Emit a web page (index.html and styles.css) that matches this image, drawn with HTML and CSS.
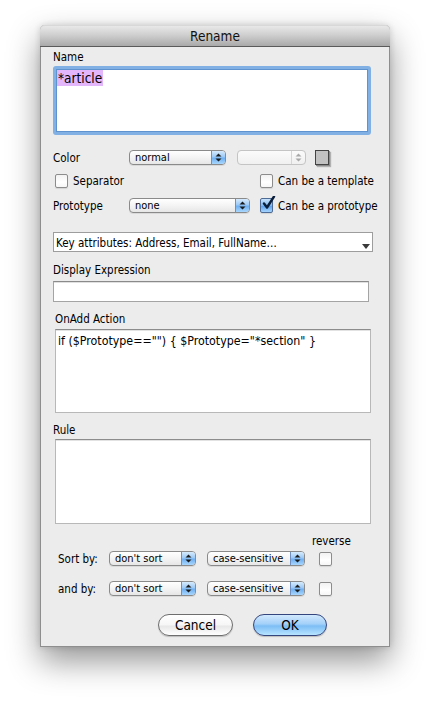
FILE: index.html
```html
<!DOCTYPE html>
<html>
<head>
<meta charset="utf-8">
<title>Rename</title>
<link rel="stylesheet" href="styles.css">
</head>
<body>
<div class="stage">
  <div class="window">
    <div class="titlebar">Rename</div>
    <div class="content">
      <div class="label lbl-name">Name</div>
      <div class="namefield"><span class="sel">*article</span></div>

      <div class="row row-color">
        <span class="rlabel">Color</span>
        <div class="popup w97"><span class="ptext">normal</span><span class="cap"><svg width="7" height="9" viewBox="0 0 7 9"><path d="M3.5 0.5 L6.5 3.5 L0.5 3.5 Z M3.5 8.5 L6.5 5.5 L0.5 5.5 Z" fill="#1b1b1b"/></svg></span></div>
        <div class="popup disabled w69"><span class="ptext"></span><span class="cap"><svg width="7" height="9" viewBox="0 0 7 9"><path d="M3.5 0.5 L6.5 3.5 L0.5 3.5 Z M3.5 8.5 L6.5 5.5 L0.5 5.5 Z" fill="#a8a8a8"/></svg></span></div>
        <div class="swatch"></div>
      </div>

      <div class="row row-checks">
        <label class="check sep"><span class="box"></span><span>Separator</span></label>
        <label class="check"><span class="box"></span><span>Can be a template</span></label>
      </div>

      <div class="row row-proto">
        <span class="rlabel">Prototype</span>
        <div class="popup w121"><span class="ptext">none</span><span class="cap"><svg width="7" height="9" viewBox="0 0 7 9"><path d="M3.5 0.5 L6.5 3.5 L0.5 3.5 Z M3.5 8.5 L6.5 5.5 L0.5 5.5 Z" fill="#1b1b1b"/></svg></span></div>
        <label class="check proto"><span class="box checked"><svg width="15" height="15" viewBox="0 0 15 15"><path d="M3 7.5 L6 11.5 L13 0.5" fill="none" stroke="#0b1e3a" stroke-width="2.4" stroke-linecap="round" stroke-linejoin="round"/></svg></span><span>Can be a prototype</span></label>
      </div>

      <div class="keyattrs"><span>Key attributes: Address, Email, FullName…</span><svg width="8" height="5" viewBox="0 0 8 5"><path d="M0 0 L8 0 L4 5 Z" fill="#3a3a3a"/></svg></div>

      <div class="label lbl-disp">Display Expression</div>
      <div class="textfield"></div>

      <div class="label lbl-onadd">OnAdd Action</div>
      <div class="textbox onadd">if ($Prototype=="") { $Prototype="*section" }</div>

      <div class="label lbl-rule">Rule</div>
      <div class="textbox rule"></div>

      <div class="reverse">reverse</div>
      <div class="row sortrow">
        <span class="slabel">Sort by:</span>
        <div class="popup w87"><span class="ptext">don't sort</span><span class="cap"><svg width="7" height="9" viewBox="0 0 7 9"><path d="M3.5 0.5 L6.5 3.5 L0.5 3.5 Z M3.5 8.5 L6.5 5.5 L0.5 5.5 Z" fill="#1b1b1b"/></svg></span></div>
        <div class="popup w98"><span class="ptext">case-sensitive</span><span class="cap"><svg width="7" height="9" viewBox="0 0 7 9"><path d="M3.5 0.5 L6.5 3.5 L0.5 3.5 Z M3.5 8.5 L6.5 5.5 L0.5 5.5 Z" fill="#1b1b1b"/></svg></span></div>
        <span class="box sortbox"></span>
      </div>
      <div class="row sortrow androw">
        <span class="slabel">and by:</span>
        <div class="popup w87"><span class="ptext">don't sort</span><span class="cap"><svg width="7" height="9" viewBox="0 0 7 9"><path d="M3.5 0.5 L6.5 3.5 L0.5 3.5 Z M3.5 8.5 L6.5 5.5 L0.5 5.5 Z" fill="#1b1b1b"/></svg></span></div>
        <div class="popup w98"><span class="ptext">case-sensitive</span><span class="cap"><svg width="7" height="9" viewBox="0 0 7 9"><path d="M3.5 0.5 L6.5 3.5 L0.5 3.5 Z M3.5 8.5 L6.5 5.5 L0.5 5.5 Z" fill="#1b1b1b"/></svg></span></div>
        <span class="box sortbox"></span>
      </div>

      <div class="buttons">
        <div class="btn cancel">Cancel</div>
        <div class="btn ok">OK</div>
      </div>
    </div>
  </div>
</div>
</body>
</html>
```

FILE: styles.css
```css
* { box-sizing: border-box; }
html, body { margin: 0; padding: 0; background: #fff; }
body {
  width: 430px;
  height: 702px;
  overflow: hidden;
  font-family: "DejaVu Sans", "Liberation Sans", sans-serif;
  font-stretch: condensed;
  font-size: 11.5px;
  color: #000;
}
.stage { padding: 25px 0 0 40px; }
.window {
  width: 350px;
  height: 622px;
  background: #ececec;
  border: 1px solid #8e8e8e;
  border-top: none;
  border-radius: 5px 5px 0 0;
  box-shadow: 0 14px 32px rgba(0,0,0,0.42), 0 0 6px rgba(0,0,0,0.15);
  display: flex;
  flex-direction: column;
}
.titlebar {
  height: 22px;
  border-radius: 5px 5px 0 0;
  background: linear-gradient(#e8e8e8, #cfcfcf 45%, #a9a9a9);
  border-bottom: 1px solid #5a5a5a;
  border-top: 1px solid #d8d8d8;
  text-align: center;
  font-size: 13.5px;
  line-height: 20px;
  color: #111;
  margin: 0 -1px;
}
.content {
  padding: 0 0 0 12px;
  display: flex;
  flex-direction: column;
}
.label { height: 13px; line-height: 15px; white-space: nowrap; }
.lbl-name { margin-top: 3px; }
.namefield {
  margin-top: 3px;
  width: 318px;
  height: 69px;
  background: #fff;
  border: 3px solid #80b0e4;
  border-radius: 3px;
  box-shadow: inset 0 0 0 1px #5f93cf;
  padding: 2px 0 0 1px;
  font-size: 13.5px;
  line-height: 15px;
}
.sel { background: #e3b5fb; padding: 0 1px; }

.row { display: flex; align-items: center; white-space: nowrap; }
.rlabel { width: 76px; }
.row-color { margin-top: 15px; height: 15px; }
.row-checks { margin-top: 9px; height: 14px; }
.row-proto { margin-top: 10px; height: 15px; }

.popup {
  height: 15px;
  border: 1px solid #8a8a8a;
  border-radius: 4px;
  background: linear-gradient(#ffffff, #f4f4f4 50%, #e6e6e6);
  display: flex;
  align-items: center;
  overflow: hidden;
  box-shadow: 0 1px 0 rgba(0,0,0,0.08);
}
.ptext { flex: 1; padding-left: 5px; line-height: 14px; font-size: 11px; white-space: nowrap; }
.cap {
  width: 14px;
  height: 100%;
  display: flex;
  align-items: center;
  justify-content: center;
  background: linear-gradient(#d6eafd, #9ccaf6 45%, #6fb0f2 55%, #a9d6fc);
  border-left: 1px solid #6f8fc0;
}
.popup.disabled { border-color: #c4c4c4; background: linear-gradient(#fbfbfb, #f0f0f0); box-shadow: none; }
.popup.disabled .cap { background: none; border-left: 1px solid #d6d6d6; }
.w97 { width: 97px; }
.w69 { width: 69px; margin-left: 11px; }
.w121 { width: 121px; }
.w87 { width: 87px; }
.w98 { width: 98px; margin-left: 11px; }
.swatch {
  width: 14px;
  height: 15px;
  margin-left: 9px;
  background: #c2c2c2;
  border: 1px solid #444;
  box-shadow: 1px 1px 0 #8a8a8a, 2px 2px 1px rgba(0,0,0,0.25);
}

.check { display: flex; align-items: center; gap: 5px; }
.box {
  width: 13px;
  height: 14px;
  border: 1px solid #8c8c8c;
  border-radius: 2px;
  background: linear-gradient(#f2f2f2, #ffffff 60%, #f6f6f6);
  box-shadow: 0 1px 1px rgba(0,0,0,0.1);
  flex: none;
  position: relative;
}
.sep { margin-left: 2px; width: 205px; }
.proto { margin-left: 10px; }
.box.checked {
  background: linear-gradient(#c9e2fb, #7fb9f3 50%, #5ea4ef 55%, #a6d3fd);
  border-color: #4e6b95;
  height: 15px;
}
.box.checked svg { position: absolute; left: 0; top: -3px; }

.keyattrs {
  margin-top: 19px;
  width: 320px;
  height: 20px;
  background: #fff;
  border: 1px solid #9d9d9d;
  display: flex;
  align-items: center;
  justify-content: space-between;
  padding: 1px 2px 0 2px;
  white-space: nowrap;
}
.keyattrs svg { margin-top: 8px; }
.lbl-disp { margin-top: 11px; }
.textfield {
  margin-top: 5px;
  width: 316px;
  height: 21px;
  background: #fff;
  border: 1px solid #a4a4a4;
  border-top-color: #8a8a8a;
  box-shadow: inset 0 1px 0 #e0e0e0;
}
.lbl-onadd { margin-top: 10px; margin-left: 2px; }
.textbox {
  margin-top: 4px;
  margin-left: 2px;
  width: 316px;
  background: #fff;
  border: 1px solid #b8b8b8;
  border-top-color: #8c8c8c;
  box-shadow: inset 0 1px 0 #e2e2e2;
  padding: 4px 0 0 2px;
  font-size: 12.3px;
  line-height: 14px;
  white-space: nowrap;
}
.onadd { height: 84px; }
.lbl-rule { margin-top: 10px; }
.rule { margin-top: 3px; height: 85px; }

.reverse { margin-top: 10px; height: 13px; line-height: 14px; padding-left: 259px; }
.sortrow { margin-top: 4px; height: 15px; padding-left: 5px; }
.androw { margin-top: 15px; }
.slabel { width: 51px; }
.sortbox { margin-left: 14px; height: 14px; }

.buttons { margin-top: 18px; display: flex; padding-left: 105px; gap: 20px; }
.btn {
  width: 75px;
  height: 22px;
  border-radius: 11px;
  border: 1px solid #6e6e6e;
  font-size: 13.5px;
  line-height: 20px;
  text-align: center;
  box-shadow: 0 1px 1px rgba(0,0,0,0.2);
}
.cancel { background: linear-gradient(#ffffff, #f6f6f6 50%, #e7e7e7 55%, #ffffff); }
.ok {
  width: 74px;
  border-color: #35467e;
  background: linear-gradient(#d2e9fd, #a3d0f9 45%, #7cbdf5 55%, #b8e4ff);
}
```
